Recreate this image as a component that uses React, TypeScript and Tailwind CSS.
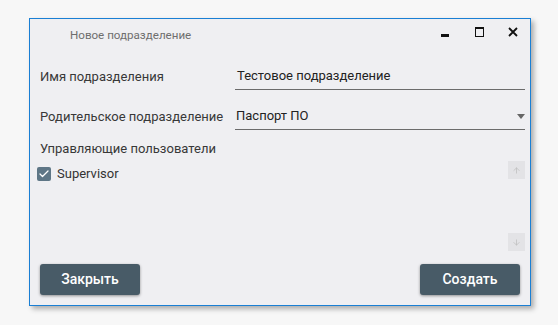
import React from "react";
import { ArrowUp, ArrowDown, Check } from "lucide-react";

const font = { fontFamily: "Roboto, 'Noto Sans', sans-serif" };

const WindowControls = () => (
  <div className="flex">
    <div className="w-[34px] h-[26px] flex items-center justify-center">
      <svg width="8" height="3" className="mt-[6px]">
        <rect width="8" height="3" fill="#111" />
      </svg>
    </div>
    <div className="w-[34px] h-[26px] flex items-center justify-center">
      <svg width="9" height="10">
        <rect x="0.5" y="0.5" width="8" height="9" fill="none" stroke="#111" />
        <rect x="0" y="0" width="9" height="2" fill="#111" />
      </svg>
    </div>
    <div className="w-[34px] h-[26px] flex items-center justify-center">
      <svg width="10" height="10">
        <path d="M1 1L9 9M9 1L1 9" stroke="#111" strokeWidth="1.8" />
      </svg>
    </div>
  </div>
);

const App = () => {
  return (
    <div
      className="w-[558px] h-[325px] bg-[#f7f7f7] pt-[18px] pl-[29px]"
      style={font}
    >
      <div className="w-[502px] h-[288px] border border-[#1a7fd4] bg-[#efeff2] shadow-[3px_3px_5px_rgba(0,0,0,0.3)] flex flex-col">
        <div className="h-[34px] flex items-start justify-between">
          <div className="h-[34px] flex items-center pl-[40px] text-[11.6px] text-[#6e6e6e]">
            Новое подразделение
          </div>
          <WindowControls />
        </div>
        <div className="flex-1 flex flex-col pl-[10px] pr-[5px]">
          <div className="mt-[10px] h-[27px] flex">
            <div className="w-[195px] flex items-center text-[13px] text-[#383838]">
              Имя подразделения
            </div>
            <div className="flex-1 flex items-center border-b border-[#6b6b6b] pl-[2px] text-[13px] text-[#222]">
              Тестовое подразделение
            </div>
          </div>
          <div className="mt-[13px] h-[27px] flex">
            <div className="w-[195px] flex items-center text-[13px] text-[#383838]">
              Родительское подразделение
            </div>
            <div className="flex-1 flex items-center justify-between border-b border-[#6b6b6b] pl-[1px] text-[13px] text-[#222]">
              <span>Паспорт ПО</span>
              <svg width="8" height="5">
                <path d="M0 0H8L4 5Z" fill="#666" />
              </svg>
            </div>
          </div>
          <div className="mt-[11px] h-[16px] flex items-center text-[13px] text-[#383838]">
            Управляющие пользователи
          </div>
          <div className="mt-[4px] h-[90px] flex justify-between">
            <div className="pt-[5px] ml-[-3px]">
              <div className="flex items-center h-[16px]">
                <div className="w-[14px] h-[14px] rounded-[2px] bg-[#5e7686] flex items-center justify-center">
                  <Check size={12} strokeWidth={2.5} color="#ffffff" />
                </div>
                <span className="ml-[6px] text-[13px] text-[#333]">Supervisor</span>
              </div>
            </div>
            <div className="w-[17px] flex flex-col justify-between">
              <div className="h-[18px] bg-[#e3e3e6] flex items-center justify-center">
                <ArrowUp size={9} strokeWidth={2} color="#bdbdbd" />
              </div>
              <div className="h-[18px] bg-[#e3e3e6] flex items-center justify-center">
                <ArrowDown size={9} strokeWidth={2} color="#bdbdbd" />
              </div>
            </div>
          </div>
          <div className="mt-auto mb-[10px] mr-[5px] flex justify-between">
            <button className="w-[100px] h-[31px] rounded-[3px] bg-[#485b67] text-white text-[14px] font-medium shadow-[0_1px_3px_rgba(0,0,0,0.4)]">
              Закрыть
            </button>
            <button className="w-[100px] h-[31px] rounded-[3px] bg-[#485b67] text-white text-[14px] font-medium shadow-[0_1px_3px_rgba(0,0,0,0.4)]">
              Создать
            </button>
          </div>
        </div>
      </div>
    </div>
  );
};

export default App;
